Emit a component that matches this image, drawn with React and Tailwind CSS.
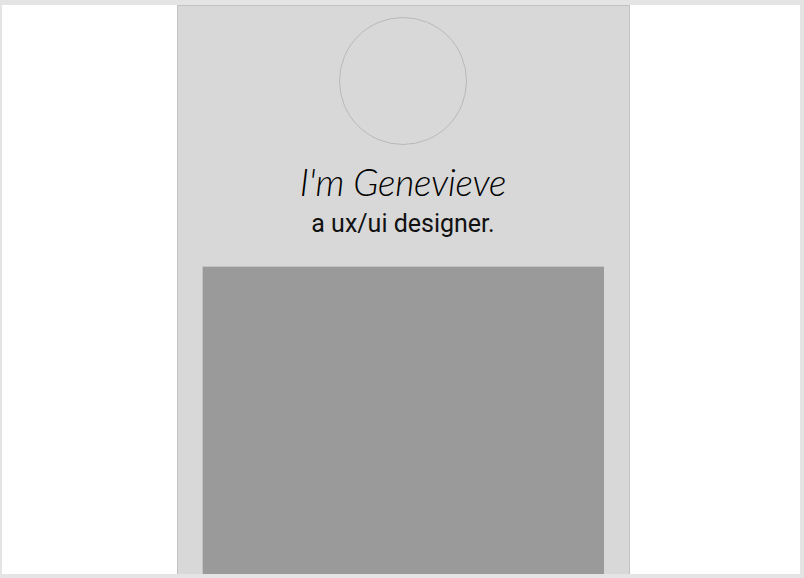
export default function App() {
    return (
        <div className="w-[804px] h-[578px] bg-[#e4e4e4] pt-[5px] pl-[2px] pr-[4px] pb-[4px] overflow-hidden">
            <div className="w-full h-full bg-white flex justify-center pl-[4px]">
                <div className="w-[453px] h-full bg-[#d8d8d8] border-l border-r border-t border-[#c2c2c2] flex flex-col items-center pt-[11px] overflow-hidden">
                    {/* avatar */}
                    <div className="w-[128px] h-[128px] rounded-full border border-[#b9b9b9] shrink-0" />
                    <h1 className="mt-[14px] text-[37px] leading-[46px] italic font-light text-black tracking-[-0.2px]" style={{ fontFamily: '"Lato", "Open Sans", sans-serif' }}>
                        I'm Genevieve
                    </h1>
                    <p className="mt-[4px] text-[25px] leading-[30px] text-[#111]" style={{ fontFamily: 'Roboto, "Open Sans", sans-serif' }}>
                        a ux/ui designer.
                    </p>
                    <div className="mt-[27px] w-[402px] flex-1 bg-[#9a9a9a] border-l border-t border-[#c4c4c4]" />
                </div>
            </div>
        </div>
    );
}
